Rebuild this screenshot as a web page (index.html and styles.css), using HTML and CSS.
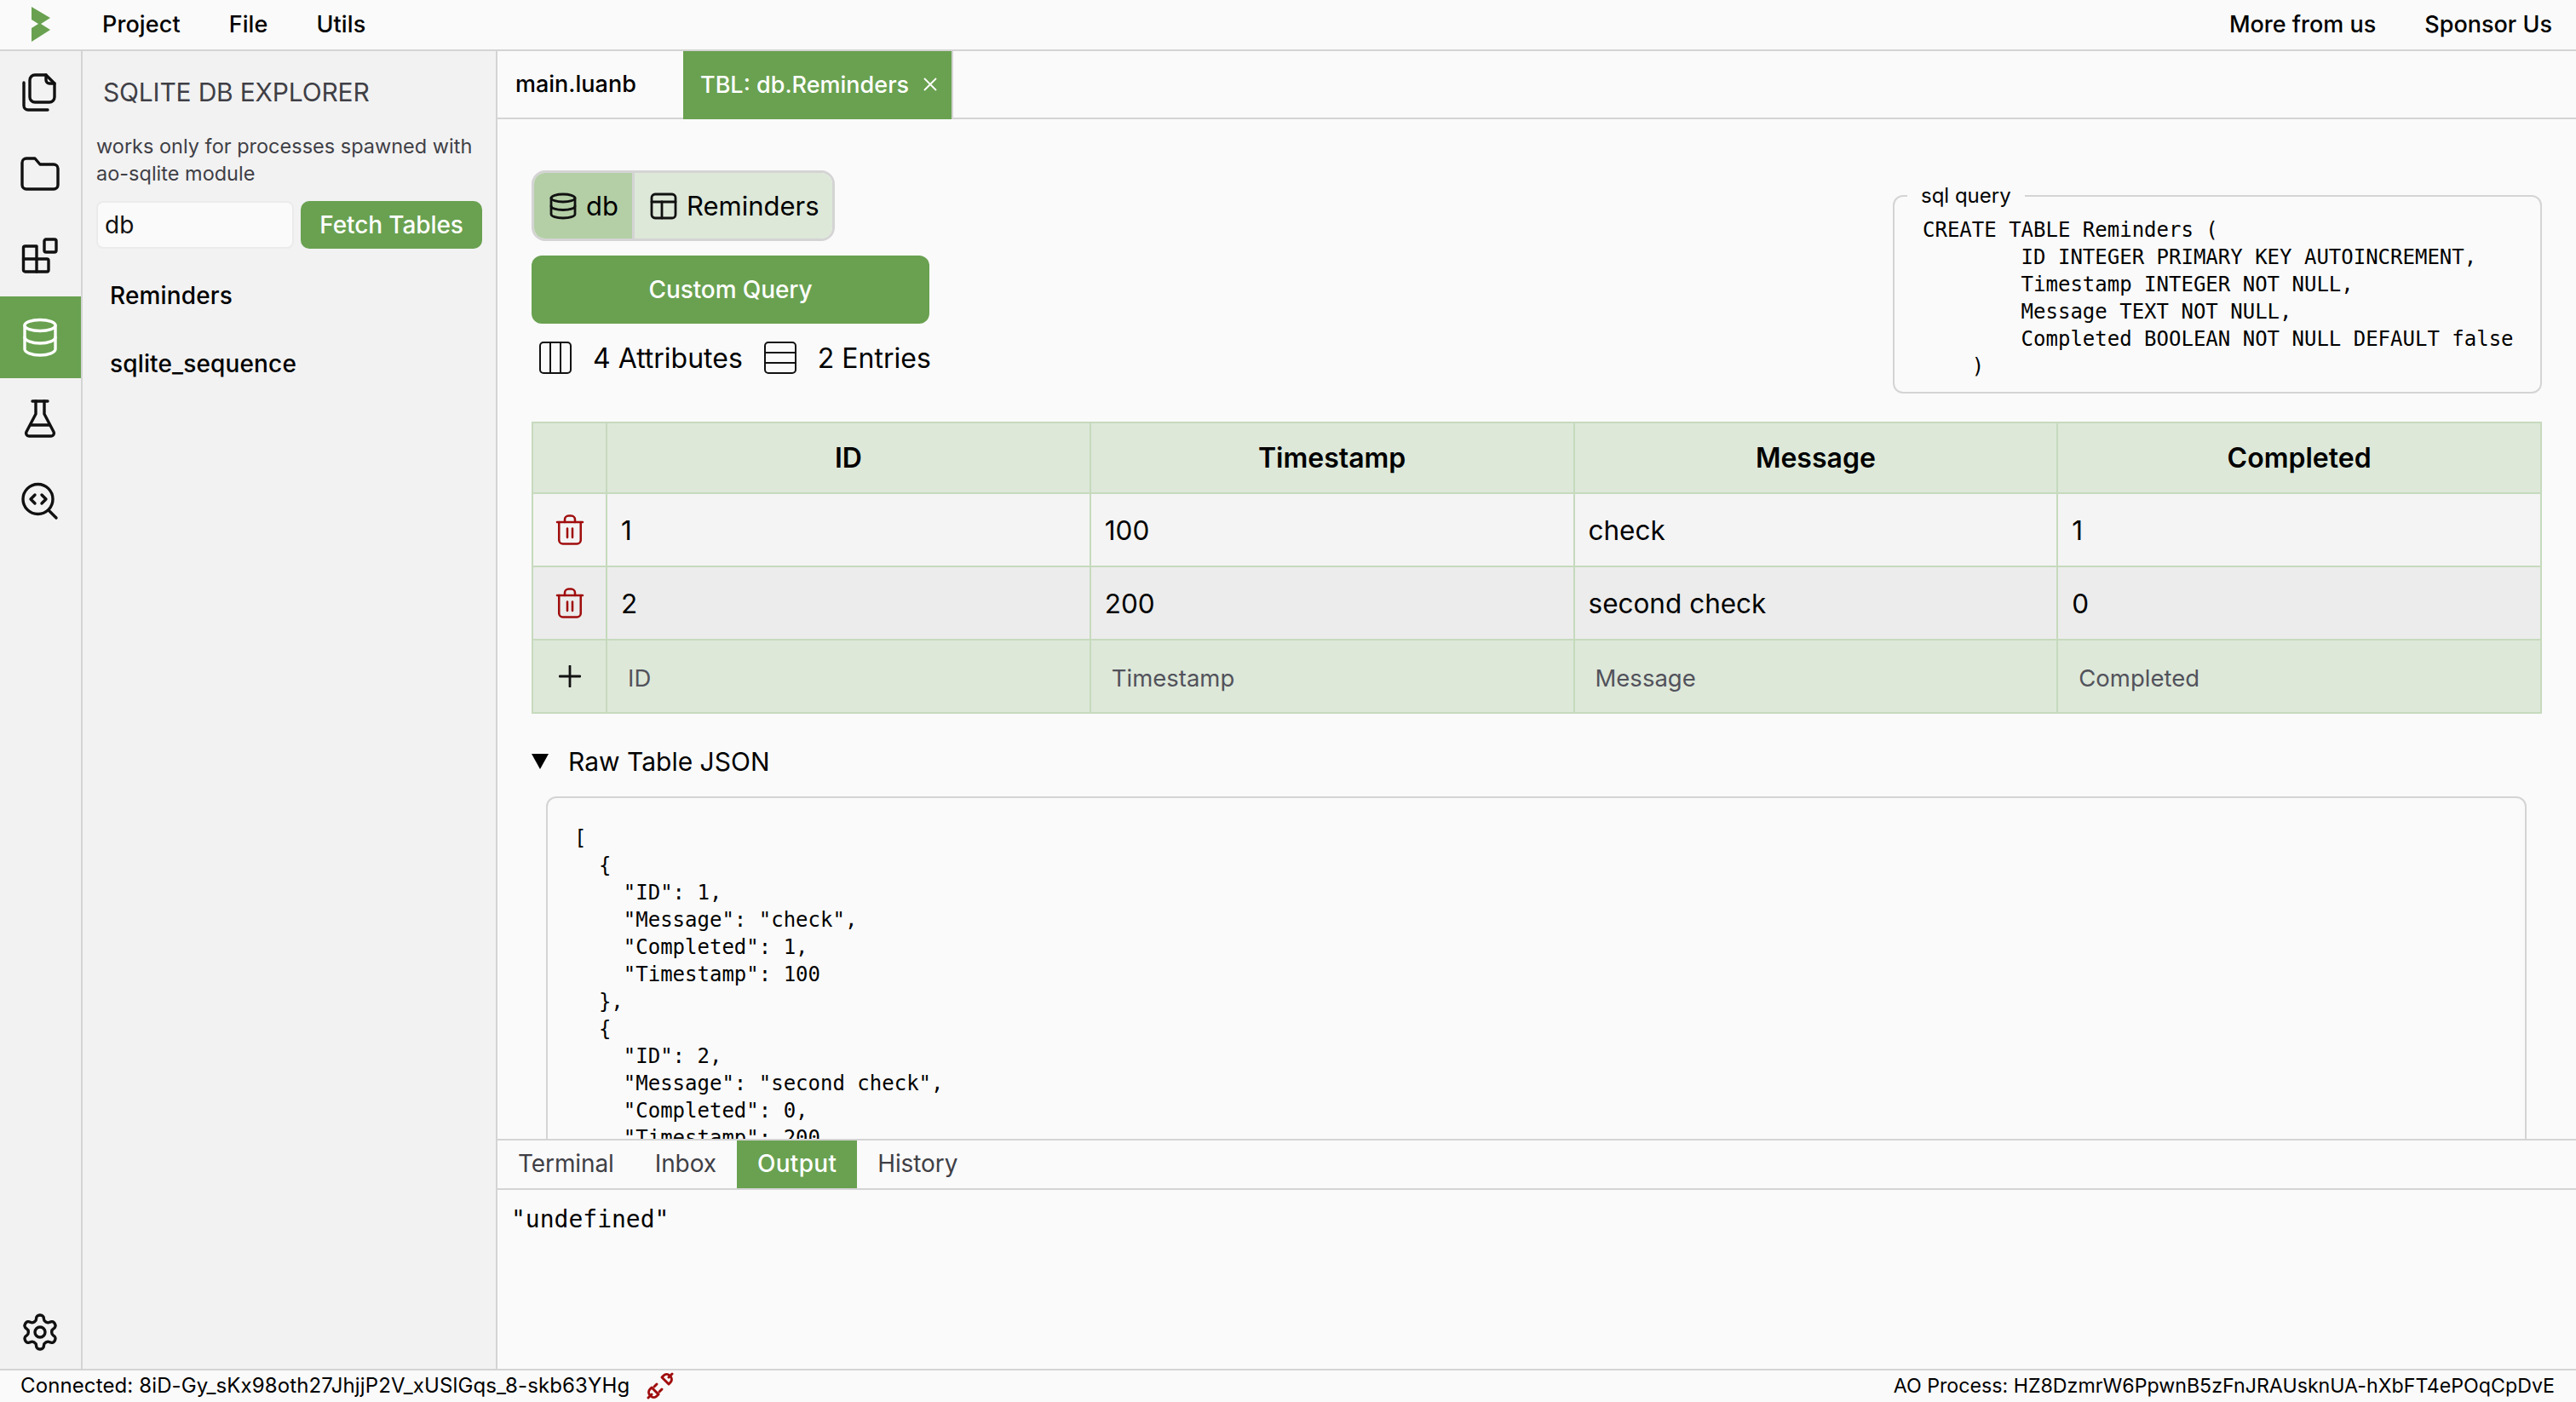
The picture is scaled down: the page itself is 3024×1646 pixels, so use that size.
FILE: index.html
```html
<!DOCTYPE html>
<html lang="en">

<head>
    <meta charset="UTF-8">
    <meta name="viewport" content="width=device-width, initial-scale=1.0">
    <title>SQLite DB Explorer</title>
    <link rel="stylesheet" href="styles.css">
</head>

<body>
    <header class="topbar">
        <div class="logo">
            <svg width="48" height="58" viewBox="0 0 48 58"><polygon class="logo-mark" points="13,8 35,21 24,28 35,35 13,49 13,33 21,28 13,23" /></svg>
        </div>
        <nav class="menu">
            <span>Project</span>
            <span>File</span>
            <span>Utils</span>
        </nav>
        <nav class="menu menu-right">
            <span>More from us</span>
            <span>Sponsor Us</span>
        </nav>
    </header>

    <div class="workspace">
        <aside class="rail">
            <div class="rail-item">
                <svg class="icon" width="48" height="48" viewBox="0 0 48 48"><path d="M18 4h13l10 10v16a6 6 0 0 1-6 6H18a6 6 0 0 1-6-6V10a6 6 0 0 1 6-6z" /><path d="M31 4v6a4 4 0 0 0 4 4h6" /><path d="M5 13v27a5 5 0 0 0 5 5h23" /></svg>
            </div>
            <div class="rail-item">
                <svg class="icon" width="48" height="48" viewBox="0 0 48 48"><path d="M8 6h10l6 7h16a5 5 0 0 1 5 5v19a5 5 0 0 1-5 5H8a5 5 0 0 1-5-5V11a5 5 0 0 1 5-5z" /></svg>
            </div>
            <div class="rail-item">
                <svg class="icon" width="48" height="48" viewBox="0 0 48 48"><rect x="29" y="5" width="14" height="15" rx="2" /><path d="M6.5 13H20v30H6.500a2 2 0 0 1-2-2V15a2 2 0 0 1 2-2z" /><path d="M4.500 28H32a2 2 0 0 1 2 2v11a2 2 0 0 1-2 2H20" /></svg>
            </div>
            <div class="rail-item active">
                <svg class="icon" width="48" height="48" viewBox="0 0 48 48"><ellipse cx="24" cy="10" rx="18" ry="6.500" /><path d="M6 10v28c0 3.600 8 7 18 7s18-3.400 18-7V10" /><path d="M6 24c0 3.600 8 7 18 7s18-3.400 18-7" /></svg>
            </div>
            <div class="rail-item">
                <svg class="icon" width="48" height="48" viewBox="0 0 48 48"><path d="M15 3h18" /><path d="M19 3v15L8 39a3.500 3.500 0 0 0 3 5h26a3.500 3.500 0 0 0 3-5L29 18V3" /><path d="M13.500 31h21" /></svg>
            </div>
            <div class="rail-item">
                <svg class="icon" width="48" height="48" viewBox="0 0 48 48"><circle cx="21.500" cy="22" r="17.500" /><path d="M34 35l9 9" /><path d="M18 17l-5 5 5 5" /><path d="M26 17l5 5-5 5" /></svg>
            </div>
            <div class="rail-item rail-bottom">
                <svg class="icon thin" width="48" height="48" viewBox="0 0 24 24"><path d="M12.220 2h-.44a2 2 0 0 0-2 2v.18a2 2 0 0 1-1 1.730l-.43.25a2 2 0 0 1-2 0l-.15-.08a2 2 0 0 0-2.730.73l-.22.38a2 2 0 0 0 .73 2.730l.15.1a2 2 0 0 1 1 1.720v.51a2 2 0 0 1-1 1.740l-.15.09a2 2 0 0 0-.73 2.730l.22.38a2 2 0 0 0 2.730.73l.15-.08a2 2 0 0 1 2 0l.43.25a2 2 0 0 1 1 1.730V20a2 2 0 0 0 2 2h.44a2 2 0 0 0 2-2v-.18a2 2 0 0 1 1-1.730l.43-.25a2 2 0 0 1 2 0l.15.08a2 2 0 0 0 2.730-.73l.22-.39a2 2 0 0 0-.73-2.730l-.15-.08a2 2 0 0 1-1-1.740v-.5a2 2 0 0 1 1-1.740l.15-.09a2 2 0 0 0 .73-2.730l-.22-.38a2 2 0 0 0-2.730-.73l-.15.08a2 2 0 0 1-2 0l-.43-.25a2 2 0 0 1-1-1.730V4a2 2 0 0 0-2-2z" /><circle cx="12" cy="12" r="3" /></svg>
            </div>
        </aside>

        <aside class="panel">
            <p class="panel-title">SQLITE DB EXPLORER</p>
            <p class="panel-note">works only for processes spawned with ao-sqlite module</p>
            <div class="db-form">
                <input class="db-input" type="text" value="db">
                <button class="btn db-fetch">Fetch Tables</button>
            </div>
            <div class="table-list">
                <div class="table-item">Reminders</div>
                <div class="table-item">sqlite_sequence</div>
            </div>
        </aside>

        <main class="main">
            <div class="tabs">
                <div class="tab">main.luanb</div>
                <div class="tab active">TBL: db.Reminders
                    <svg class="tab-close" width="16" height="16" viewBox="0 0 16 16"><path d="M1 1l14 14M15 1L1 15" /></svg>
                </div>
            </div>

            <div class="content">
                <div class="query-head">
                    <div class="query-left">
                        <div class="crumbs">
                            <div class="crumb current">
                                <svg class="icon small" width="32" height="32" viewBox="0 0 32 32"><ellipse cx="16" cy="6.500" rx="14" ry="4.500" /><path d="M2 6.500v19c0 2.500 6 4.500 14 4.500s14-2 14-4.500v-19" /><path d="M2 16c0 2.500 6 4.500 14 4.500s14-2 14-4.500" /></svg>
                                db
                            </div>
                            <div class="crumb">
                                <svg class="icon small" width="32" height="32" viewBox="0 0 32 32"><rect x="2" y="2" width="28" height="28" rx="4" /><path d="M2 11h28" /><path d="M14 11v19" /></svg>
                                Reminders
                            </div>
                        </div>
                        <button class="btn custom-query">Custom Query</button>
                        <div class="stats">
                            <svg class="icon line" width="38" height="38" viewBox="0 0 38 38"><rect x="1" y="1" width="36" height="36" rx="4" /><path d="M13 1v36M25 1v36" /></svg>
                            <span>4 Attributes</span>
                            <svg class="icon line" width="38" height="38" viewBox="0 0 38 38"><rect x="1" y="1" width="36" height="36" rx="4" /><path d="M1 13h36M1 25h36" /></svg>
                            <span>2 Entries</span>
                        </div>
                    </div>
                    <fieldset class="sql-box">
                        <legend>sql query</legend>
                        <pre class="code">CREATE TABLE Reminders (
        ID INTEGER PRIMARY KEY AUTOINCREMENT,
        Timestamp INTEGER NOT NULL,
        Message TEXT NOT NULL,
        Completed BOOLEAN NOT NULL DEFAULT false
    )</pre>
                    </fieldset>
                </div>

                <table class="rows">
                    <thead>
                        <tr>
                            <th class="col-action"></th>
                            <th>ID</th>
                            <th>Timestamp</th>
                            <th>Message</th>
                            <th>Completed</th>
                        </tr>
                    </thead>
                    <tbody>
                        <tr>
                            <td class="col-action">
                                <svg class="icon trash" width="36" height="36" viewBox="0 0 24 24"><path d="M2 6h20" /><path d="M3.500 6v14a3 3 0 0 0 3 3h11a3 3 0 0 0 3-3V6" /><path d="M8 6V4a3 3 0 0 1 3-3h2a3 3 0 0 1 3 3v2" /><path d="M10 11v7M14 11v7" /></svg>
                            </td>
                            <td>1</td>
                            <td>100</td>
                            <td>check</td>
                            <td>1</td>
                        </tr>
                        <tr>
                            <td class="col-action">
                                <svg class="icon trash" width="36" height="36" viewBox="0 0 24 24"><path d="M2 6h20" /><path d="M3.500 6v14a3 3 0 0 0 3 3h11a3 3 0 0 0 3-3V6" /><path d="M8 6V4a3 3 0 0 1 3-3h2a3 3 0 0 1 3 3v2" /><path d="M10 11v7M14 11v7" /></svg>
                            </td>
                            <td>2</td>
                            <td>200</td>
                            <td>second check</td>
                            <td>0</td>
                        </tr>
                        <tr class="add-row">
                            <td class="col-action">
                                <svg class="icon plus" width="26" height="26" viewBox="0 0 26 26"><path d="M13 1v24M1 13h24" /></svg>
                            </td>
                            <td><input class="add-input" placeholder="ID"></td>
                            <td><input class="add-input" placeholder="Timestamp"></td>
                            <td><input class="add-input" placeholder="Message"></td>
                            <td><input class="add-input" placeholder="Completed"></td>
                        </tr>
                    </tbody>
                </table>

                <details class="raw" open>
                    <summary>Raw Table JSON</summary>
                    <pre class="code raw-json">[
  {
    "ID": 1,
    "Message": "check",
    "Completed": 1,
    "Timestamp": 100
  },
  {
    "ID": 2,
    "Message": "second check",
    "Completed": 0,
    "Timestamp": 200
  }
]</pre>
                </details>
            </div>

            <section class="bottom">
                <div class="bottom-tabs">
                    <div class="bottom-tab">Terminal</div>
                    <div class="bottom-tab">Inbox</div>
                    <div class="bottom-tab active">Output</div>
                    <div class="bottom-tab">History</div>
                </div>
                <pre class="output">"undefined"</pre>
            </section>
        </main>
    </div>

    <footer class="status">
        <div class="status-left">
            <span>Connected: 8iD-Gy_sKx98oth27JhjjP2V_xUSlGqs_8-skb63YHg</span>
            <svg class="unplug" width="32" height="32" viewBox="0 0 32 32"><path d="M2 30l4-4" /><path d="M6 18l8 8-2 2a5 5 0 0 1-7 0l-1-1a5 5 0 0 1 0-7z" /><path d="M9 17l3-3M15 23l3-3" /><path d="M26 6l4-4" /><path d="M26 14l-8-8 2-2a5 5 0 0 1 7 0l1 1a5 5 0 0 1 0 7z" /></svg>
        </div>
        <span class="status-right">AO Process: HZ8DzmrW6PpwnB5zFnJRAUsknUA-hXbFT4ePOqCpDvE</span>
    </footer>
</body>

</html>
```

FILE: styles.css
```css
* {
    box-sizing: border-box;
}

body {
    font-family: Inter, "Noto Sans", sans-serif;
    background-color: #fafafa;
    color: #000;
    display: flex;
    flex-direction: column;
    height: 100vh;
    margin: 0;
    overflow: hidden;
}

.icon {
    fill: none;
    stroke: #111;
    stroke-width: 3.4;
    stroke-linecap: round;
    stroke-linejoin: round;
    flex-shrink: 0;
}

.icon.thin {
    stroke-width: 1.7;
}

.icon.small {
    stroke-width: 2.800;
}

.icon.line {
    stroke-width: 2;
}

.btn {
    background-color: #69a150;
    color: #fff;
    border: none;
    font-family: inherit;
    font-size: 28px;
    font-weight: 500;
    letter-spacing: -0.1px;
    cursor: pointer;
}

/* top bar */
.topbar {
    display: flex;
    align-items: center;
    flex-shrink: 0;
    height: 60px;
    border-bottom: 2px solid #d4d4d4;
}

.logo {
    width: 95px;
    padding-left: 24px;
    display: flex;
}

.logo-mark {
    fill: #69a150;
}

.menu {
    display: flex;
    gap: 57px;
    padding-left: 25px;
    padding-bottom: 2px;
    font-size: 27px;
    font-weight: 500;
    letter-spacing: 0.1px;
}

.menu-right {
    margin-left: auto;
    padding-right: 28px;
    letter-spacing: 0;
}

/* middle */
.workspace {
    flex: 1;
    display: flex;
    min-height: 0;
}

.rail {
    width: 97px;
    flex-shrink: 0;
    display: flex;
    flex-direction: column;
    background-color: #f2f2f2;
    border-right: 2px solid #d4d4d4;
}

.rail-item {
    height: 96px;
    padding-right: 2px;
    display: flex;
    align-items: center;
    justify-content: center;
}

.rail-item.active {
    background-color: #69a150;
}

.rail-item.active .icon {
    stroke: #fff;
}

.rail-bottom {
    margin-top: auto;
    padding-bottom: 2px;
    height: 85px;
}

.panel {
    width: 487px;
    flex-shrink: 0;
    padding-top: 28px;
    background-color: #f2f2f2;
    border-right: 2px solid #d4d4d4;
}

.panel-title {
    margin: 0 0 28px 24px;
    font-size: 30px;
    letter-spacing: -0.2px;
    line-height: 40px;
    color: #3f3f46;
}

.panel-note {
    margin: 0 16px 16px;
    font-size: 23.500px;
    line-height: 32px;
    color: #3f3f46;
}

.db-form {
    display: flex;
    gap: 8px;
    margin-left: 16px;
}

.db-input {
    width: 232px;
    height: 56px;
    padding: 0 8px;
    border: 2px solid #ebebeb;
    border-radius: 8px;
    background-color: #fafafa;
    font-family: inherit;
    font-size: 28px;
    color: #111;
}

.db-fetch {
    width: 213px;
    height: 56px;
    border-radius: 10px;
}

.table-list {
    margin-top: 15px;
}

.table-item {
    height: 80px;
    padding-left: 32px;
    display: flex;
    align-items: center;
    font-size: 28px;
    font-weight: 500;
    letter-spacing: 0.15px;
}

/* main column */
.main {
    flex: 1;
    min-width: 0;
    display: flex;
    flex-direction: column;
}

.tabs {
    display: flex;
    flex-shrink: 0;
    height: 80px;
    border-bottom: 2px solid #d4d4d4;
}

.tab {
    display: flex;
    align-items: center;
    padding: 0 21px 2px;
    width: 218px;
    font-size: 27px;
    font-weight: 500;
}

.tab.active {
    width: 317px;
    margin-bottom: -2px;
    padding: 0 17px 2px 20px;
    justify-content: space-between;
    background-color: #69a150;
    border-right: 2px solid #d4d4d4;
    color: #fff;
}

.tab-close {
    fill: none;
    stroke: #fff;
    stroke-width: 1.800;
    flex-shrink: 0;
}

.content {
    flex: 1;
    min-height: 0;
    overflow: hidden;
    padding: 60px 40px 0;
}

.query-head {
    display: flex;
    justify-content: space-between;
    align-items: flex-start;
    margin-bottom: 33px;
}

.query-left {
    display: flex;
    flex-direction: column;
    align-items: flex-start;
}

.crumbs {
    display: flex;
    height: 83px;
    border: 3px solid #d4d4d4;
    border-radius: 16px;
    overflow: hidden;
    font-size: 31px;
}

.crumb {
    display: flex;
    align-items: center;
    gap: 11px;
    padding: 0 15px 0 18px;
    background-color: #dde8d9;
}

.crumb.current {
    background-color: #b4cfa6;
    border-right: 3px solid #d4d4d4;
    padding-right: 16px;
}

.custom-query {
    width: 467px;
    height: 80px;
    margin-top: 17px;
    border-radius: 12px;
}

.stats {
    display: flex;
    align-items: center;
    gap: 25px;
    margin-top: 21px;
    padding-left: 9px;
    height: 38px;
    font-size: 32px;
}

.sql-box {
    width: 762px;
    margin: 16px 0 0;
    padding: 10px 16px 14px 33px;
    border: 2px solid #d4d4d4;
    border-radius: 12px;
}

.sql-box legend {
    margin-left: -18px;
    padding: 0 16px;
    font-size: 24px;
    line-height: 28px;
}

.code {
    margin: 0;
    font-family: "DejaVu Sans Mono", "Liberation Mono", monospace;
    font-size: 24px;
    line-height: 32px;
}

/* table */
.rows {
    width: 100%;
    border-collapse: collapse;
    table-layout: fixed;
    font-size: 31.500px;
}

.rows th,
.rows td {
    padding: 0 16px;
    border: 2px solid #c6dabd;
    text-align: left;
}

.rows td {
    height: 86px;
}

.rows th {
    height: 83px;
    background-color: #dde8d9;
    text-align: center;
    font-size: 32px;
    font-weight: 600;
}

.rows tbody tr:nth-child(1) td {
    background-color: #f4f4f4;
}

.rows tbody tr:nth-child(2) td {
    background-color: #ececec;
}

.rows tbody tr.add-row td {
    background-color: #dde8d9;
}

.rows .col-action {
    width: 87px;
    padding: 0;
    text-align: center;
}

.col-action .icon {
    display: block;
    margin: 0 auto;
}

.icon.trash {
    stroke: #a00d0d;
    stroke-width: 1.700;
}

.icon.plus {
    stroke-width: 2.800;
}

.add-input {
    width: 100%;
    padding: 0 8px;
    border: none;
    background: transparent;
    font-family: inherit;
    font-size: 27.500px;
    outline: none;
}

.add-input::placeholder {
    color: #52525b;
    opacity: 1;
}

/* raw json */
.raw summary {
    display: flex;
    align-items: center;
    margin-top: 36px;
    height: 40px;
    gap: 23px;
    list-style: none;
    font-size: 30px;
}

.raw summary::before {
    content: "";
    width: 0;
    height: 0;
    border-left: 10.500px solid transparent;
    border-right: 10.500px solid transparent;
    border-top: 18px solid #000;
}

.raw-json {
    margin: 21px 18px 0 17px;
    padding: 31px 31px 32px;
    border: 2px solid #d4d4d4;
    border-radius: 12px;
}

/* bottom panel */
.bottom {
    flex-shrink: 0;
    height: 270px;
    border-top: 2px solid #d4d4d4;
}

.bottom-tabs {
    display: flex;
    height: 58px;
    border-bottom: 2px solid #d4d4d4;
}

.bottom-tab {
    display: flex;
    align-items: center;
    padding: 0 24px 2px;
    font-size: 28px;
    letter-spacing: -0.1px;
    color: #3f3f46;
}

.bottom-tab.active {
    background-color: #69a150;
    color: #fff;
    font-weight: 500;
    letter-spacing: 0.3px;
}

.output {
    margin: 0;
    padding: 15px 16px;
    font-family: "DejaVu Sans Mono", monospace;
    font-size: 28px;
    line-height: 40px;
}

/* status bar */
.status {
    display: flex;
    justify-content: space-between;
    align-items: center;
    flex-shrink: 0;
    height: 39px;
    padding: 0 25px 2px 24px;
    border-top: 2px solid #d4d4d4;
    font-size: 24px;
}

.status-left {
    display: flex;
    align-items: center;
    gap: 20px;
    letter-spacing: 0.12px;
}

.status-right {
    font-size: 23.200px;
}

.unplug {
    fill: none;
    stroke: #a00d0d;
    stroke-width: 3;
    stroke-linecap: round;
    stroke-linejoin: round;
}
```
